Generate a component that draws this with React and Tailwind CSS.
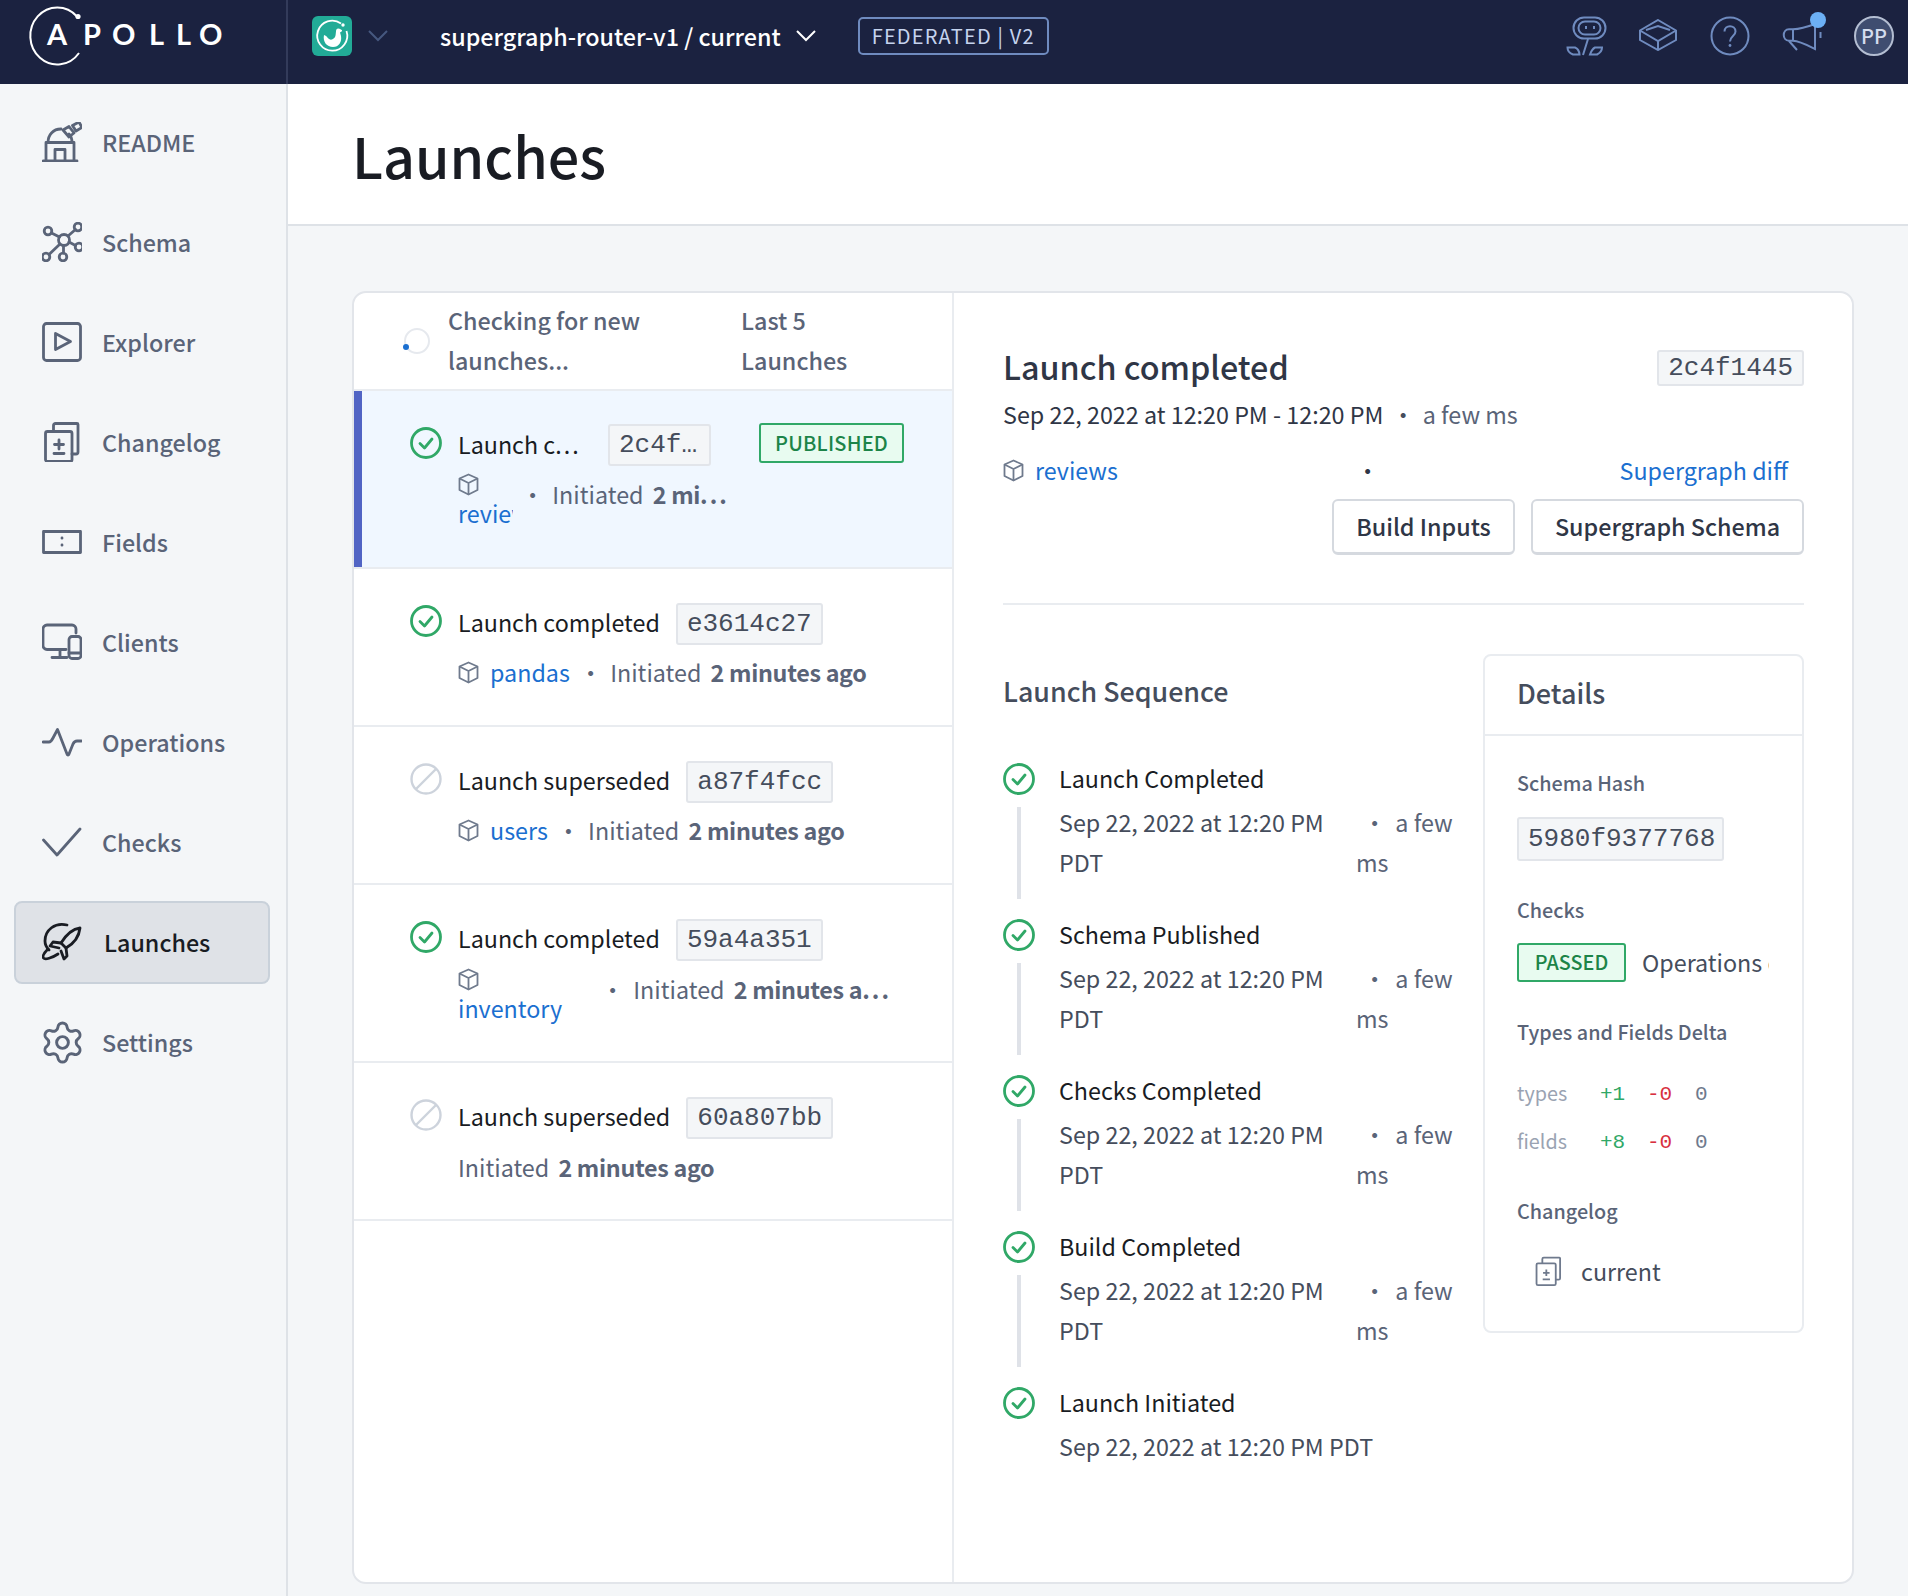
import { Settings } from "lucide-react";

const sans = "font-['Noto_Sans_CJK_SC','Source_Sans_Pro',sans-serif]";

function Logo() {
  return (
    <svg width="240" height="84" viewBox="0 0 240 84" fill="none">
      <path d="M77 16.500 A 27 28.500 0 1 0 79 53" stroke="#fff" strokeWidth="2" />
      <circle cx="78" cy="16.500" r="2.600" fill="#fff" />
      <text x="47 83 112 149 176 199" y="45" fill="#fff" fontFamily="Lato, sans-serif" fontWeight="700" fontSize="29">
        APOLLO
      </text>
    </svg>
  );
}

function AppIcon() {
  return (
    <div className="w-[40px] h-[40px] rounded-[6px] bg-[#22ab97]">
      <svg width="40" height="40" viewBox="0 0 40 40" fill="none">
        <path d="M29 7.500 A 15 15 0 1 0 34.500 15" stroke="#fff" strokeWidth="1.800" />
        <circle cx="31" cy="9" r="1.700" fill="#fff" />
        <path d="M12 19 C10.500 26 15 31 21 31 C27 31 30 26 29 20 L28 16.500 C30 15.500 31 14.500 29 13.500 C26 11.500 24 12.500 24 15.500 C23.500 19 24 22 20 23.500 C16.500 24.500 15.500 20 12 19Z" fill="#fff" />
      </svg>
    </div>
  );
}

function TopIcons() {
  const s = { stroke: "#6f8bbf", strokeWidth: 2, fill: "none" };
  return (
    <div className="flex items-center ml-auto pr-[14px]">
      <svg width="42" height="40" viewBox="0 0 42 40" className="mr-[31px]" {...s}>
        <rect x="7.500" y="1.500" width="32" height="21" rx="10.500" />
        <rect x="12.500" y="5.500" width="22" height="13" rx="6.500" />
        <path d="M20 10 V13 M28 10 V13 M22 23 L17 39" />
        <path d="M1.500 31.500 H9 C13 33 13.500 38.500 13.500 38.500 H7 C3 37 1.500 34 1.500 31.500Z" />
        <path d="M36 31.500 H29 C26 33 24 38.500 24 38.500 H31 C34 37 36 34 36 31.500Z" />
      </svg>
      <svg width="38" height="32" viewBox="0 0 38 32" className="mr-[33px] -mt-[3px]" {...s}>
        <path d="M19 1 L37 11.500 V21 L19 31 L1 21 V11.500 Z" />
        <path d="M1 11.500 L19 22 L37 11.500 M19 22 V31 M7 11 L19 7 L31 11" />
      </svg>
      <svg width="40" height="40" viewBox="0 0 40 40" className="mr-[32px]" {...s}>
        <circle cx="20" cy="20" r="18.500" />
        <path d="M14.500 15.500 C14.500 8.500 25.500 8.500 25.500 15.500 C25.500 20 20 20 20 25.500" />
        <circle cx="20" cy="29.500" r="1.400" fill="#6f8bbf" stroke="none" />
      </svg>
      <div className="relative w-[44px] h-[40px] mr-[28px]">
        <svg width="44" height="40" viewBox="0 0 44 40" className="absolute left-0 top-0" {...s}>
          <path d="M11 13.300 C18 13 25 11 33 8 V33 C25 29 18 25 11 24.700 H7 C0 24.700 0 13.300 7 13.300 Z" />
          <path d="M11 13.300 V24.700 M7 25 L15 34 M38.500 16 V22" />
        </svg>
        <div className="absolute left-[28px] top-[-4px] w-[16px] h-[16px] rounded-full bg-[#6cb0f5]" />
      </div>
      <div className="w-[40px] h-[40px] rounded-full bg-[#3f4d70] border-2 border-[#b4bed2] flex items-center justify-center text-[#d4ddee] text-[20px] font-medium leading-none">
        PP
      </div>
    </div>
  );
}

function TopBar() {
  return (
    <div className="h-[84px] bg-[#1b2240] flex items-center pb-[12px] text-white">
      <div className="w-[288px] h-[84px] -mb-[12px] border-r-2 border-[#333b5a] shrink-0">
        <Logo />
      </div>
      <div className="ml-[24px]"><AppIcon /></div>
      <svg width="20" height="12" viewBox="0 0 20 12" className="ml-[16px]" fill="none" stroke="#46587f" strokeWidth="2">
        <path d="M1 1 L10 10 L19 1" />
      </svg>
      <div className="ml-[52px] text-[23.300px] leading-[36px] font-medium whitespace-nowrap">supergraph-router-v1 / current</div>
      <svg width="20" height="12" viewBox="0 0 20 12" className="ml-[15px]" fill="none" stroke="#fff" strokeWidth="2">
        <path d="M1 1 L10 10 L19 1" />
      </svg>
      <div className="ml-[42px] h-[38px] w-[191px] flex items-center justify-center rounded-[5px] border-2 border-[#6f8bbf] text-[#c5d3ee] text-[20px] tracking-[1.200px] whitespace-nowrap">
        FEDERATED | V2
      </div>
      <TopIcons />
    </div>
  );
}

const navStroke = { fill: "none", strokeWidth: 2.800, strokeLinecap: "round", strokeLinejoin: "round" };

const navIcons = {
  README: (
    <>
      <path d="M1 39 H35 M4 39 V20.500 H32 V39 M13 39 V27.500 H23 V39" />
      <path d="M6 20.500 C6 13 11 7 19 7 M27 12 C29 14 30 17 30 20.500" />
      <path d="M21 8 L27 4.500 L32 11 L27 15 Z M30.500 3.500 L37 0 L40 5.500 L34 9 Z" />
    </>
  ),
  Schema: (
    <>
      <circle cx="22" cy="18" r="5.500" />
      <circle cx="6" cy="9" r="3.800" />
      <circle cx="36" cy="5" r="3.800" />
      <circle cx="37" cy="25" r="3.800" />
      <circle cx="21" cy="35" r="3.800" />
      <circle cx="4" cy="35" r="3.800" />
      <path d="M9.500 11 L17.500 15 M26 14 L33.500 7.500 M27 20 L33.500 23.500 M21.500 23.500 V31 M18 22 L7 32.500" />
    </>
  ),
  Explorer: (
    <>
      <rect x="1.500" y="1.500" width="37" height="37" rx="3" />
      <path d="M13.500 11.500 L28.500 19.500 L13.500 27.500 Z" />
    </>
  ),
  Changelog: (
    <>
      <rect x="3.500" y="9.500" width="26.500" height="30" rx="2" />
      <path d="M11.500 9 V3.500 a2 2 0 0 1 2 -2 H35 a1 1 0 0 1 1 1 V30 a2 2 0 0 1 -2 2 H30" />
      <path d="M17 18 V27 M12.500 22.500 H21.500 M12 31.500 H22" />
    </>
  ),
  Fields: (
    <>
      <rect x="1.500" y="9.500" width="37" height="21" />
      <path d="M20 16 V16.200 M20 23 V23.200" />
    </>
  ),
  Clients: (
    <>
      <path d="M24 27.500 H5 a4 4 0 0 1 -4 -4 V7 a4 4 0 0 1 4 -4 H30 a4 4 0 0 1 4 4 V11" />
      <rect x="27" y="14.500" width="12" height="22" rx="3" />
      <path d="M27 31 H39 M18 28 V35 M10 35.500 H25" />
    </>
  ),
  Operations: <path d="M1 20 H7 C9 20 10 18 11 16 L15.500 7.500 L25 32 C25.500 33.500 26.500 33.500 27 32 L31 22 C32 20 33 19 35 19 H39.500" />,
  Checks: <path d="M1.500 18 L15 33 L38 7" />,
  Launches: (
    <>
      <path d="M38 6 C30 7 24 13 19 21 L24 26 C31 22 37 15 38 6Z" />
      <path d="M19 21 L11 20 L8 24 L17 26 M24 26 L25 34 L22 37 L19 29" />
      <path d="M25 3 C13 0 3 8 3 19 C3 23 5 26 7 28" />
      <path d="M16 32 C10 36 3 38 1.500 36 C0 34 3 30 6 27" />
    </>
  ),
};

const navItems = ["README", "Schema", "Explorer", "Changelog", "Fields", "Clients", "Operations", "Checks", "Launches", "Settings"];

function NavItem({ name }) {
  const active = name === "Launches";
  return (
    <div className="h-[100px] flex items-center">
      <div
        className={`flex items-center w-[256px] h-[83px] ml-[14px] rounded-[8px] border-2 ${
          active ? "bg-[#dfe2e7] border-[#c9d1da] text-[#191c23]" : "border-transparent text-[#5a6478]"
        }`}
      >
        <div className="w-[40px] h-[40px] ml-[26px] shrink-0 flex items-center justify-center">
          {name === "Settings" ? (
            <Settings size={47} strokeWidth={1.500} className="shrink-0" />
          ) : (
            <svg width="40" height="40" viewBox="0 0 40 40" stroke={active ? "#191c23" : "#5a6478"} {...navStroke}>
              {navIcons[name]}
            </svg>
          )}
        </div>
        <span className={`text-[23.300px] leading-[36px] font-medium ${active ? "ml-[22px]" : "ml-[20px]"}`}>{name}</span>
      </div>
    </div>
  );
}

function Sidebar() {
  return (
    <div className="w-[288px] shrink-0 border-r-2 border-[#dee2e7] bg-[#f4f6f8] pt-[8px]">
      {navItems.map((n) => (
        <NavItem key={n} name={n} />
      ))}
    </div>
  );
}

function CheckIcon() {
  return (
    <svg width="32" height="32" viewBox="0 0 32 32" fill="none" stroke="#30a867" strokeWidth="2.800" strokeLinecap="round" strokeLinejoin="round">
      <circle cx="16" cy="16" r="14.500" />
      <path d="M10 16.500 L14.500 21 L22 12" />
    </svg>
  );
}

function SupersededIcon() {
  return (
    <svg width="32" height="32" viewBox="0 0 32 32" fill="none" stroke="#cdd3dc" strokeWidth="2.400">
      <circle cx="16" cy="16" r="14.500" />
      <path d="M6 26 L26 6" />
    </svg>
  );
}

function Cube({ className = "" }) {
  return (
    <svg width="21" height="23" viewBox="0 0 21 23" fill="none" stroke="#6f7a8d" strokeWidth="1.800" strokeLinejoin="round" className={className}>
      <path d="M10.500 1.500 L19.500 5.500 V17 L10.500 21.500 L1.500 17 V5.500 Z" />
      <path d="M1.500 5.500 L10.500 10 L19.500 5.500 M10.500 10 V21.500" />
    </svg>
  );
}

function Chip({ children, className = "" }) {
  return (
    <span className={`inline-block h-[42px] leading-[38px] px-[9px] rounded-[3px] border-2 border-[#e2e5ea] bg-[#f4f6f8] text-[#454d5c] font-['Liberation_Mono',monospace] text-[26px] whitespace-nowrap overflow-hidden ${className}`}>
      {children}
    </span>
  );
}

function Bold({ children }) {
  return <b className="font-semibold ml-[4px] tracking-[-0.300px]">{children}</b>;
}

function Ago() {
  return (
    <span className="whitespace-nowrap text-[#5a6478]">
      Initiated <Bold>2 minutes ago</Bold>
    </span>
  );
}

function Dots() {
  return <span className="tracking-[2px]">...</span>;
}

function RowFrame({ h, selected, icon, children }) {
  return (
    <div className={`${h} relative flex border-b-2 border-[#e9ecf0] pl-[56px] pt-[33px] ${selected ? "bg-[#f0f7ff]" : ""}`}>
      {selected && <div className="absolute left-0 top-0 bottom-0 w-[8px] bg-[#5164c4]" />}
      <div className="w-[32px] h-[38px] flex items-center shrink-0">{icon}</div>
      <div className="ml-[16px] min-w-0 flex-1">{children}</div>
    </div>
  );
}

function LaunchList() {
  return (
    <div className="w-[600px] shrink-0 border-r-2 border-[#e9ecf0] text-[23.300px] leading-[40px]">
      <div className="h-[98px] flex items-center border-b-2 border-[#e9ecf0] text-[#5a6478] font-medium">
        <div className="relative w-[26px] h-[26px] ml-[50px] rounded-full border-2 border-[#e6e9ee]">
          <div className="absolute left-[-3px] bottom-[2px] w-[6px] h-[6px] rounded-full bg-[#1b6fd0]" />
        </div>
        <div className="ml-[18px] w-[293px] pb-[3px]">Checking for new<br />launches...</div>
        <div className="pb-[3px]">Last 5<br />Launches</div>
      </div>

      <RowFrame h="h-[178px]" selected icon={<CheckIcon />}>
        <div className="flex items-start">
          <span className="w-[122px] h-[42px] whitespace-nowrap text-[#191c23]">Launch c<Dots /></span>
          <Chip className="w-[103px] ml-[28px]">2c4f…</Chip>
          <span className="ml-[48px] -mt-[1px] h-[40px] w-[145px] flex items-center justify-center rounded-[3px] border-2 border-[#30a867] bg-[#e8fbf0] text-[#1c8448] text-[20px] font-medium tracking-[0.200px]">PUBLISHED</span>
        </div>
        <div className="flex items-center mt-[7px]">
          <div className="w-[55px] overflow-hidden">
            <Cube className="block" />
            <div className="text-[#1b6fd0] leading-[36px] -mt-[1px]">reviews</div>
          </div>
          <span className="ml-[8px] text-[#5a6478] -mt-[16px]">•</span>
          <span className="ml-[8px] whitespace-nowrap text-[#5a6478] -mt-[16px]">Initiated <Bold>2 mi<Dots /></Bold></span>
        </div>
      </RowFrame>

      <RowFrame h="h-[158px]" icon={<CheckIcon />}>
        <div className="flex items-center">
          <span className="text-[#191c23] pb-[3px]">Launch completed</span>
          <Chip className="ml-[16px]">e3614c27</Chip>
        </div>
        <div className="flex items-center mt-[7px]">
          <Cube />
          <span className="ml-[11px] text-[#1b6fd0]">pandas</span>
          <span className="ml-[9px] text-[#5a6478]">•</span>
          <span className="ml-[8px]"><Ago /></span>
        </div>
      </RowFrame>

      <RowFrame h="h-[158px]" icon={<SupersededIcon />}>
        <div className="flex items-center">
          <span className="text-[#191c23] pb-[3px]">Launch superseded</span>
          <Chip className="ml-[16px]">a87f4fcc</Chip>
        </div>
        <div className="flex items-center mt-[7px]">
          <Cube />
          <span className="ml-[11px] text-[#1b6fd0]">users</span>
          <span className="ml-[9px] text-[#5a6478]">•</span>
          <span className="ml-[8px]"><Ago /></span>
        </div>
      </RowFrame>

      <RowFrame h="h-[178px]" icon={<CheckIcon />}>
        <div className="flex items-center">
          <span className="text-[#191c23] pb-[3px]">Launch completed</span>
          <Chip className="ml-[16px]">59a4a351</Chip>
        </div>
        <div className="flex items-center mt-[7px]">
          <div className="w-[105px]">
            <Cube className="block" />
            <div className="text-[#1b6fd0] leading-[36px] -mt-[1px]">inventory</div>
          </div>
          <span className="ml-[38px] text-[#5a6478] -mt-[16px]">•</span>
          <span className="ml-[9px] whitespace-nowrap text-[#5a6478] -mt-[16px]">Initiated <Bold>2 minutes a<Dots /></Bold></span>
        </div>
      </RowFrame>

      <RowFrame h="h-[158px]" icon={<SupersededIcon />}>
        <div className="flex items-center">
          <span className="text-[#191c23] pb-[3px]">Launch superseded</span>
          <Chip className="ml-[16px]">60a807bb</Chip>
        </div>
        <div className="mt-[8px]"><Ago /></div>
      </RowFrame>
    </div>
  );
}

function Step({ title, last }) {
  return (
    <div className="flex h-[156px]">
      <div className="w-[32px] shrink-0 flex flex-col items-center pt-[1px]">
        <CheckIcon />
        {!last && <div className="w-[4px] h-[92px] mt-[12px] bg-[#dfe2e8]" />}
      </div>
      <div className="ml-[24px] flex-1">
        <div className="h-[36px] leading-[36px] -mt-[2px] text-[#191c23]">{title}</div>
        {last ? (
          <div className="mt-[6px] text-[#454d5c]">Sep 22, 2022 at 12:20 PM PDT</div>
        ) : (
          <div className="flex mt-[6px]">
            <div className="w-[297px] pr-[20px] text-[#454d5c]">Sep 22, 2022 at 12:20 PM PDT</div>
            <div className="w-[110px] text-[#5a6478]">
              <span className="ml-[7px] mr-[9px]">•</span>a few ms
            </div>
          </div>
        )}
      </div>
    </div>
  );
}

function Label({ children, className = "" }) {
  return <div className={`text-[19.800px] leading-[30px] translate-y-[1px] font-medium text-[#5a6478] ${className}`}>{children}</div>;
}

function Delta({ name, plus }) {
  return (
    <div className="flex h-[48px] items-center font-['Liberation_Mono',monospace] text-[21px]">
      <span className={`w-[83px] pb-[4px] text-[19.800px] text-[#9aa3b2] ${sans}`}>{name}</span>
      <span className="w-[47px] text-[#30a867]">{plus}</span>
      <span className="w-[48px] text-[#d8303f]">-0</span>
      <span className="text-[#6f7a8d]">0</span>
    </div>
  );
}

function Details() {
  return (
    <div className="w-[321px] h-[679px] shrink-0 rounded-[8px] border-2 border-[#e9ecf0]">
      <div className="h-[80px] flex items-center pl-[32px] pb-[5px] border-b-2 border-[#e9ecf0] text-[27px] font-medium text-[#454d5c]">Details</div>
      <div className="pl-[32px] pt-[31px]">
        <Label>Schema Hash</Label>
        <Chip className="mt-[20px] !h-[44px] !leading-[40px] w-[207px]">5980f9377768</Chip>
        <Label className="mt-[23px]">Checks</Label>
        <div className="flex items-center mt-[18px]">
          <span className="w-[109px] h-[39px] flex items-center justify-center rounded-[3px] border-2 border-[#30a867] bg-[#e8fbf0] text-[#1c8448] text-[19.800px] font-medium">PASSED</span>
          <span className="ml-[16px] w-[127px] overflow-hidden whitespace-nowrap text-[#454d5c]">Operations checks</span>
        </div>
        <Label className="mt-[34px]">Types and Fields Delta</Label>
        <div className="mt-[25px]">
          <Delta name="types" plus="+1" />
          <Delta name="fields" plus="+8" />
        </div>
        <Label className="mt-[28px]">Changelog</Label>
        <div className="flex items-center mt-[26px] ml-[17px]">
          <svg width="29" height="32" viewBox="0 0 40 40" fill="none" stroke="#6f7a8d" strokeWidth="2.500">
            <rect x="3.500" y="9.500" width="26.500" height="30" rx="2" />
            <path d="M11.500 9 V3.500 a2 2 0 0 1 2 -2 H35 a1 1 0 0 1 1 1 V30 a2 2 0 0 1 -2 2 H30" />
            <path d="M17 18 V27 M12.500 22.500 H21.500 M12 31.500 H22" />
          </svg>
          <span className="ml-[18px] text-[#454d5c]">current</span>
        </div>
      </div>
    </div>
  );
}

function LaunchDetail() {
  return (
    <div className="flex-1 min-w-0 pl-[49px] pr-[48px] pt-[53px] text-[23.300px] leading-[40px]">
      <div className="h-[44px] flex items-center justify-between">
        <span className="text-[32.300px] pb-[4px] font-medium text-[#2f3646]">Launch completed</span>
        <Chip className="!h-[36px] !leading-[32px]">2c4f1445</Chip>
      </div>
      <div className="mt-[6px] h-[36px] leading-[36px] text-[#2f3646] whitespace-nowrap">
        Sep 22, 2022 at 12:20 PM - 12:20 PM
        <span className="ml-[8px] mr-[8px] text-[#454d5c]">•</span>
        <span className="text-[#5a6478]">a few ms</span>
      </div>
      <div className="mt-[20px] h-[36px] leading-[36px] flex items-center">
        <Cube />
        <span className="ml-[11px] text-[#1b6fd0]">reviews</span>
        <span className="ml-[238px] text-[#2f3646]">•</span>
        <span className="ml-auto mr-[16px] text-[#1b6fd0]">Supergraph diff</span>
      </div>
      <div className="mt-[11px] flex justify-end gap-[16px]">
        <button className="h-[56px] w-[183px] pb-[2px] rounded-[6px] border-2 border-[#d5d9df] border-b-[3px] bg-white text-[#2f3646] font-medium">Build Inputs</button>
        <button className="h-[56px] w-[273px] pb-[2px] rounded-[6px] border-2 border-[#d5d9df] border-b-[3px] bg-white text-[#2f3646] font-medium">Supergraph Schema</button>
      </div>
      <div className="mt-[48px] h-[2px] bg-[#e9ecf0]" />
      <div className="mt-[49px] flex">
        <div className="flex-1 min-w-0 pt-[17px]">
          <div className="text-[26.800px] font-medium text-[#454d5c]">Launch Sequence</div>
          <div className="mt-[51px]">
            <Step title="Launch Completed" />
            <Step title="Schema Published" />
            <Step title="Checks Completed" />
            <Step title="Build Completed" />
            <Step title="Launch Initiated" last />
          </div>
        </div>
        <Details />
      </div>
    </div>
  );
}

export default function App() {
  return (
    <div className={`w-[1908px] h-[1596px] flex flex-col overflow-hidden ${sans}`}>
      <TopBar />
      <div className="flex flex-1 min-h-0">
        <Sidebar />
        <div className="flex-1 min-w-0 bg-[#f4f6f8]">
          <div className="h-[142px] bg-white border-b-2 border-[#dee2e7] flex items-center pl-[64px] pt-[2px] text-[55.700px] font-medium text-[#191c23]">Launches</div>
          <div className="ml-[64px] mt-[65px] w-[1502px] h-[1293px] flex bg-white rounded-[14px] border-2 border-[#e2e5ea] overflow-hidden">
            <LaunchList />
            <LaunchDetail />
          </div>
        </div>
      </div>
    </div>
  );
}
